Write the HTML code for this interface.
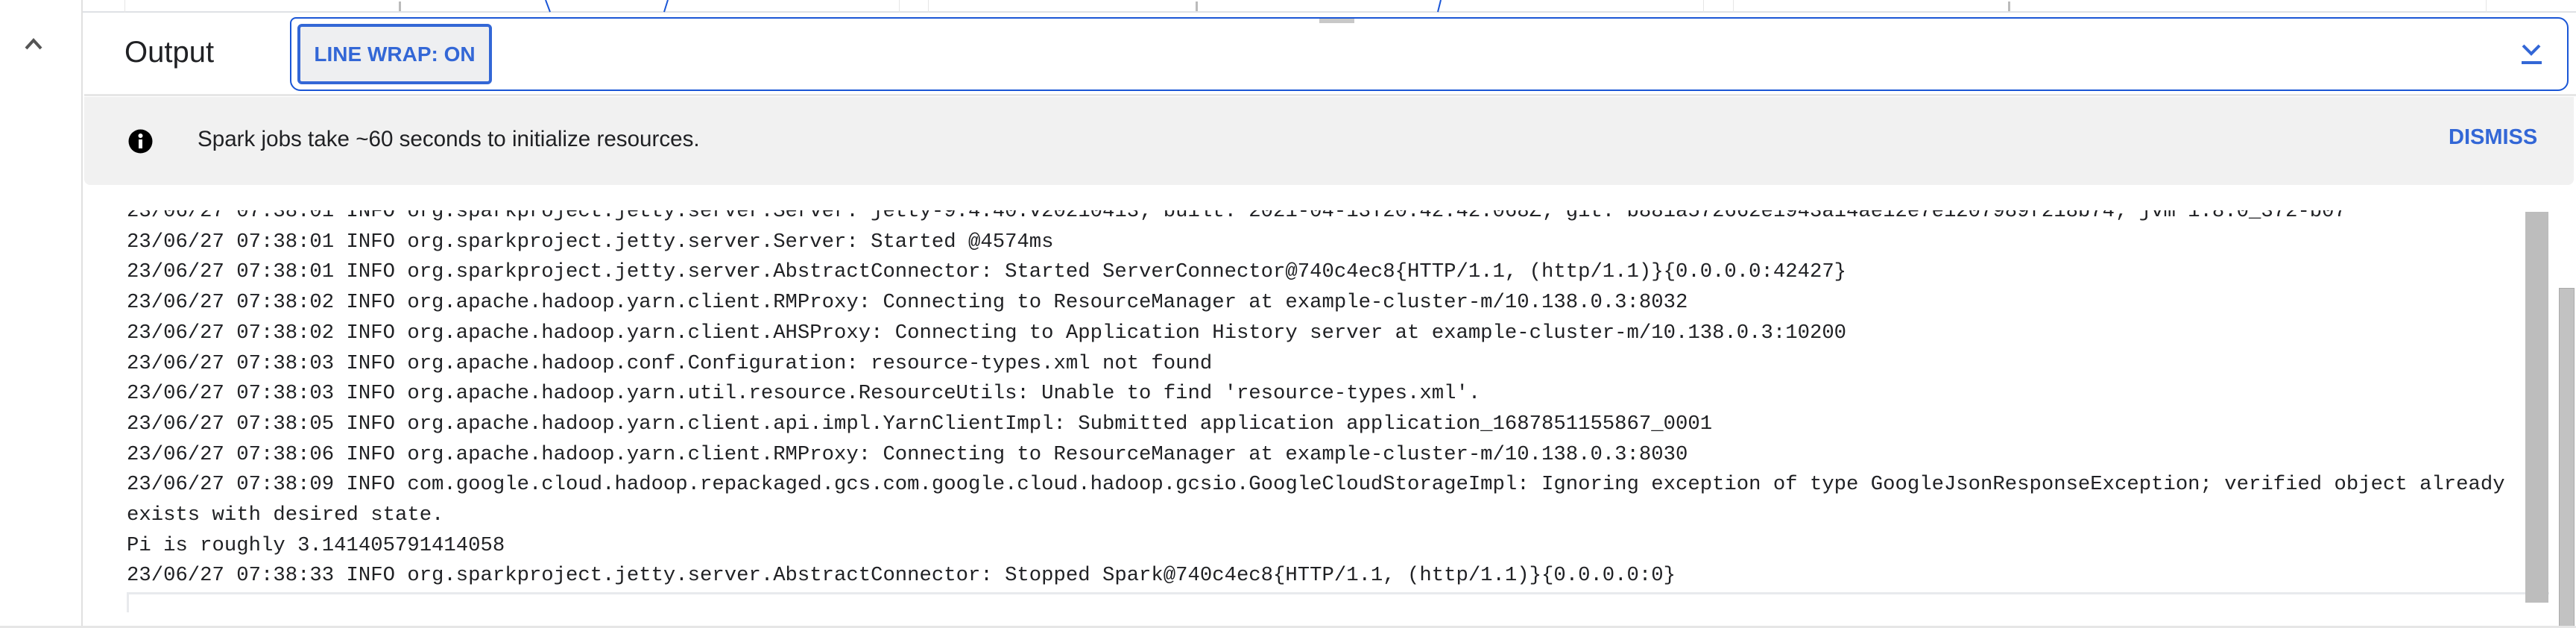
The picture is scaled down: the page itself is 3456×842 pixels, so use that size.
<!DOCTYPE html>
<html><head><meta charset="utf-8"><style>
*{margin:0;padding:0;box-sizing:border-box}
body{width:3456px;height:842px;overflow:hidden;background:#fff;position:relative;font-family:"Liberation Sans",Arial,sans-serif}
.abs{position:absolute}
.log{position:absolute;left:170px;top:282px;width:3220px;height:513px;overflow:hidden}
.log pre{position:absolute;left:0;top:-18px;font-family:"Liberation Mono",monospace;font-size:27.27px;line-height:40.7px;color:#202124;white-space:pre}
</style></head><body>
<div class="abs" style="left:111px;top:0;width:3345px;height:17px;border-bottom:2px solid #dfe1e5"></div>
<div class="abs" style="left:167px;top:0;width:1px;height:17px;background:#e6e6e6"></div>
<div class="abs" style="left:535px;top:2px;width:3px;height:13px;background:#bbb"></div>
<div class="abs" style="left:1206px;top:0;width:1px;height:17px;background:#e6e6e6"></div>
<div class="abs" style="left:1245px;top:0;width:1px;height:17px;background:#e6e6e6"></div>
<div class="abs" style="left:1604px;top:2px;width:3px;height:13px;background:#bbb"></div>
<div class="abs" style="left:2285px;top:0;width:1px;height:17px;background:#e6e6e6"></div>
<div class="abs" style="left:2325px;top:0;width:1px;height:17px;background:#e6e6e6"></div>
<div class="abs" style="left:2694px;top:2px;width:3px;height:13px;background:#bbb"></div>
<div class="abs" style="left:3335px;top:0;width:1px;height:17px;background:#e6e6e6"></div>
<svg class="abs" style="left:700px;top:0" width="1300" height="18"><path d="M32 0 L38 16 M196 0 L191 16 M1233 0 L1229 16" stroke="#1a56d6" stroke-width="2" fill="none"/></svg>
<div class="abs" style="left:1770px;top:23px;width:47px;height:8px;background:#c8c8c8"></div>
<div class="abs" style="left:0;top:0;width:111px;height:842px;border-right:2px solid #e0e0e0"></div>
<svg class="abs" style="left:33px;top:50px" width="26" height="18"><path d="M2 15 L12 4 L22 15" stroke="#555" stroke-width="4" fill="none"/></svg>
<div class="abs" style="left:113px;top:126px;width:3343px;height:3px;background:#e6e6e6"></div>
<div class="abs" style="left:167px;top:48px;font-size:40px;color:#202124">Output</div>
<div class="abs" style="left:389px;top:23px;width:3057px;height:99px;border:2px solid #1a56d6;border-radius:8px 14px 14px 14px"></div>
<div class="abs" style="left:399px;top:32px;width:261px;height:81px;border:4px solid #3367d6;border-radius:6px;background:#eeeff1;color:#3367d6;font-size:28px;font-weight:bold;line-height:73px;text-align:center">LINE WRAP: ON</div>
<svg class="abs" style="left:3382px;top:58px" width="30" height="32"><path d="M3 3 L14 14 L25 3" stroke="#3367d6" stroke-width="4" fill="none"/><rect x="1" y="24" width="27" height="4" fill="#3367d6"/></svg>
<div class="abs" style="left:113px;top:130px;width:3340px;height:118px;background:#f1f1f1;border-radius:0 0 8px 8px"></div>
<svg class="abs" style="left:172px;top:173px" width="33" height="33"><circle cx="16.5" cy="16.5" r="16" fill="#000"/><rect x="14" y="14" width="5" height="12" fill="#fff"/><circle cx="16.5" cy="9" r="3" fill="#fff"/></svg>
<div class="abs" style="left:265px;top:170px;font-size:29.6px;color:#202124">Spark jobs take ~60 seconds to initialize resources.</div>
<div class="abs" style="left:3285px;top:168px;font-size:29px;font-weight:bold;color:#3367d6">DISMISS</div>
<div class="log"><pre>23/06/27 07:38:01 INFO org.sparkproject.jetty.server.Server: jetty-9.4.40.v20210413; built: 2021-04-13T20:42:42.068Z; git: b881a572662e1943a14ae12e7e1207989f218b74; jvm 1.8.0_372-b07
23/06/27 07:38:01 INFO org.sparkproject.jetty.server.Server: Started @4574ms
23/06/27 07:38:01 INFO org.sparkproject.jetty.server.AbstractConnector: Started ServerConnector@740c4ec8{HTTP/1.1, (http/1.1)}{0.0.0.0:42427}
23/06/27 07:38:02 INFO org.apache.hadoop.yarn.client.RMProxy: Connecting to ResourceManager at example-cluster-m/10.138.0.3:8032
23/06/27 07:38:02 INFO org.apache.hadoop.yarn.client.AHSProxy: Connecting to Application History server at example-cluster-m/10.138.0.3:10200
23/06/27 07:38:03 INFO org.apache.hadoop.conf.Configuration: resource-types.xml not found
23/06/27 07:38:03 INFO org.apache.hadoop.yarn.util.resource.ResourceUtils: Unable to find 'resource-types.xml'.
23/06/27 07:38:05 INFO org.apache.hadoop.yarn.client.api.impl.YarnClientImpl: Submitted application application_1687851155867_0001
23/06/27 07:38:06 INFO org.apache.hadoop.yarn.client.RMProxy: Connecting to ResourceManager at example-cluster-m/10.138.0.3:8030
23/06/27 07:38:09 INFO com.google.cloud.hadoop.repackaged.gcs.com.google.cloud.hadoop.gcsio.GoogleCloudStorageImpl: Ignoring exception of type GoogleJsonResponseException; verified object already
exists with desired state.
Pi is roughly 3.141405791414058
23/06/27 07:38:33 INFO org.sparkproject.jetty.server.AbstractConnector: Stopped Spark@740c4ec8{HTTP/1.1, (http/1.1)}{0.0.0.0:0}</pre></div>
<div class="abs" style="left:170px;top:794px;width:3250px;height:3px;background:#e8eaed"></div>
<div class="abs" style="left:170px;top:794px;width:3px;height:27px;background:#e8eaed"></div>
<div class="abs" style="left:3388px;top:284px;width:31px;height:524px;background:#bdbdbd"></div>
<div class="abs" style="left:3433px;top:386px;width:21px;height:456px;background:#c2c2c2;border:1px solid #aaa"></div>
<div class="abs" style="left:0;top:839px;width:3456px;height:3px;background:#e6e6e6"></div>
</body></html>
